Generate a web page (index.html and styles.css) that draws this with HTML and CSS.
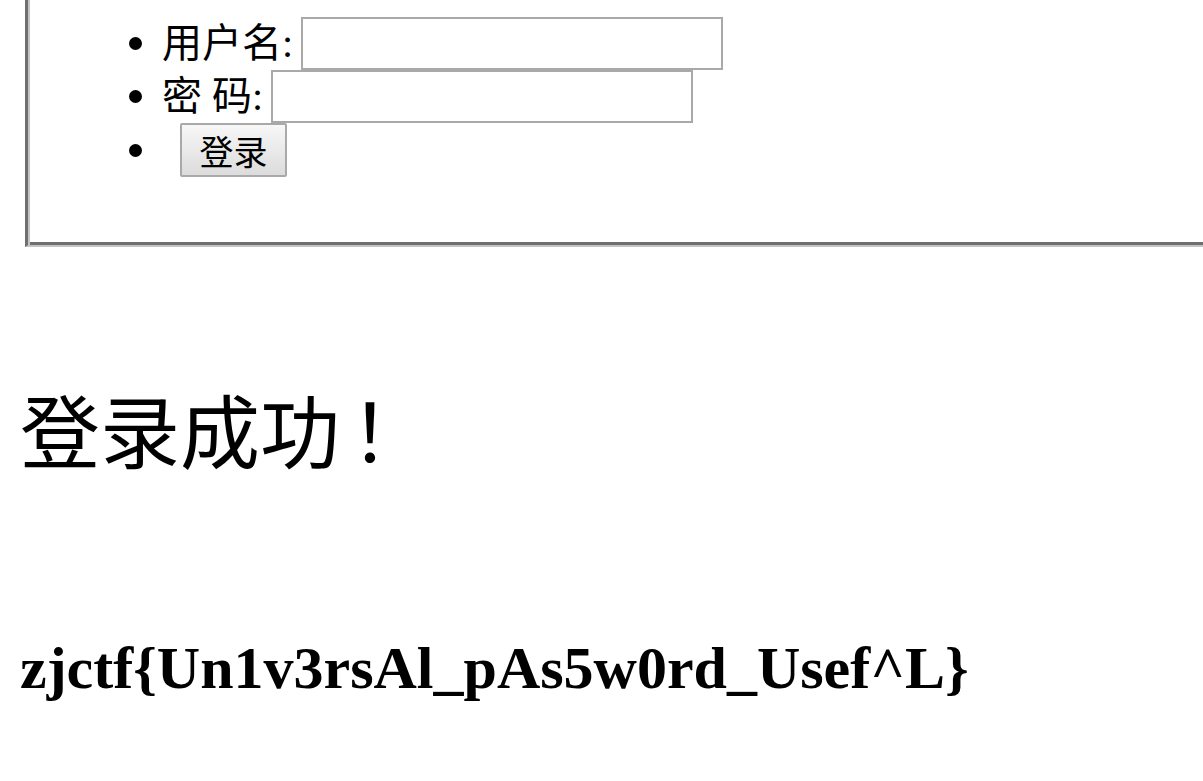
FILE: index.html
```html
<!DOCTYPE html>
<html lang="zh-CN">
<head>
  <meta charset="UTF-8" />
  <title>登录</title>
  <link rel="stylesheet" href="styles.css">
</head>
<body>
  <form class="login-box" action="#" method="post">
    <ul class="login-list">
      <li>
        <span class="label">用户名:</span>
        <input type="text" name="username" class="field" />
      </li>
      <li>
        <span class="label">密 码:</span>
        <input type="password" name="password" class="field" />
      </li>
      <li>
        <button type="submit" class="btn">登录</button>
      </li>
    </ul>
  </form>

  <h1 class="result">登录成功<span class="excl">！</span></h1>

  <h2 class="flag">zjctf{Un1v3rsAl_pAs5w0rd_Usef^L}</h2>
</body>
</html>
```

FILE: styles.css
```css
html, body {
  margin: 0;
  padding: 0;
  background: #fff;
  overflow: hidden;
}

body {
  padding: 0 20px;
  font-family: "Liberation Serif", "Noto Sans CJK SC", serif;
  font-size: 40px;
  color: #000;
}

/* Рамка формы (верх ушёл за край экрана) */
.login-box {
  margin: 0 -40px 0 5px;
  padding: 17px 0 68px;
  border-left: 3px solid #6f6f6f;
  border-bottom: 2px solid #c4c4c4;
  box-shadow: inset 2px 0 #c4c4c4, inset 0 -3px #6f6f6f;
}

.login-list {
  list-style: none;
  margin: 0;
  padding: 0 0 0 101px;
}

.login-list li {
  display: flex;
  align-items: center;
  height: 53px;
}

.login-list li:last-child {
  height: 54px;
}

.login-list li::before {
  content: "";
  width: 13px;
  height: 13px;
  border-radius: 50%;
  background: #000;
  margin-right: 20px;
  flex: none;
}

.label {
  white-space: pre;
  line-height: 1;
}

.field {
  box-sizing: border-box;
  width: 422px;
  height: 53px;
  margin: 0 0 0 8px;
  border: 2px solid #a9a9a9;
  background: #fff;
  font: inherit;
}

.btn {
  box-sizing: border-box;
  height: 54px;
  width: 107px;
  margin-left: 18px;
  padding: 0;
  border: 2px solid #a9a9a9;
  border-radius: 2px;
  background: linear-gradient(#f7f7f7, #dcdcdc);
  font-family: "Liberation Serif", "Noto Sans CJK SC", serif;
  font-size: 34px;
  color: #000;
}

.result {
  margin: 142px 0 0;
  font-size: 80px;
  font-weight: normal;
  line-height: 92px;
}

.excl {
  margin-left: 10px;
}

.flag {
  margin: 153px 0 0;
  font-size: 60px;
  font-weight: bold;
  line-height: 69px;
}
```
